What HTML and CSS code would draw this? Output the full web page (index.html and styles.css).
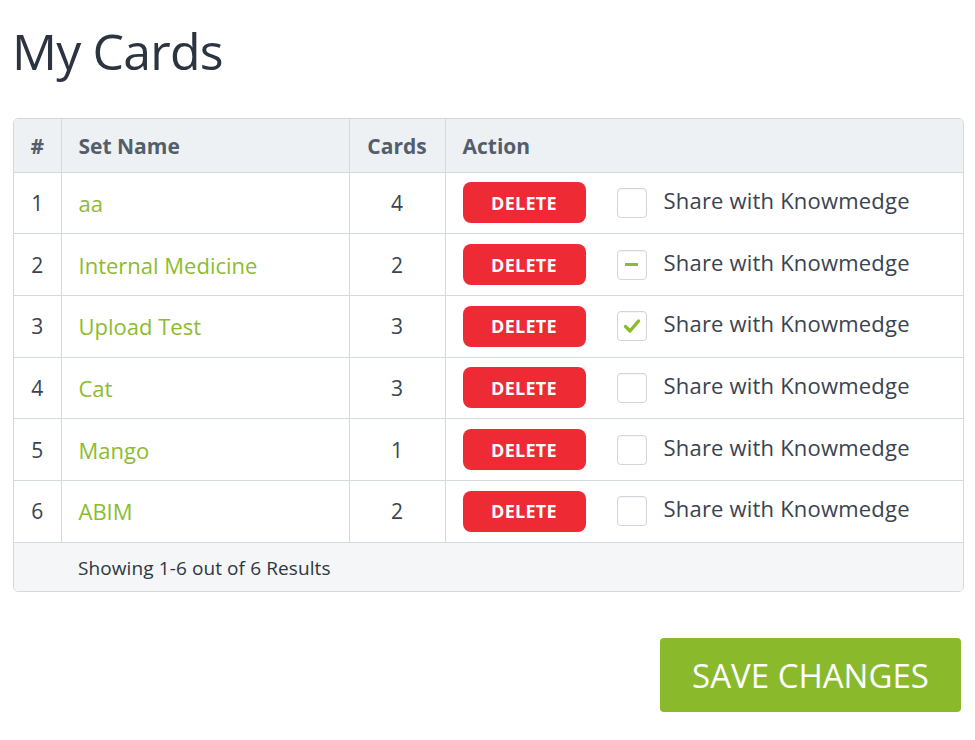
FILE: index.html
```html
<!DOCTYPE html>
<html>
<head>
<meta charset="utf-8">
<link rel="stylesheet" href="styles.css">
</head>
<body>
<div class="page">
  <h1 class="title">My Cards</h1>
  <div class="table-wrap">
    <table class="cards">
      <colgroup>
        <col class="c-num"><col class="c-name"><col class="c-cards"><col class="c-action">
      </colgroup>
      <thead>
        <tr><th class="num">#</th><th class="name">Set Name</th><th class="count">Cards</th><th class="action">Action</th></tr>
      </thead>
      <tbody>
        <tr><td class="num">1</td><td class="name"><a>aa</a></td><td class="count">4</td><td class="action"><div class="act"><button class="del">DELETE</button><span class="cb"></span><span class="share">Share with Knowmedge</span></div></td></tr>
        <tr><td class="num">2</td><td class="name"><a>Internal Medicine</a></td><td class="count">2</td><td class="action"><div class="act"><button class="del">DELETE</button><span class="cb cb-ind"><span class="dash"></span></span><span class="share">Share with Knowmedge</span></div></td></tr>
        <tr><td class="num">3</td><td class="name"><a>Upload Test</a></td><td class="count">3</td><td class="action"><div class="act"><button class="del">DELETE</button><span class="cb"><svg class="tick" viewBox="0 0 20 20"><path d="M3.5 10.5 L8 15 L16.5 5" fill="none" stroke="#8cbc2c" stroke-width="3.4" stroke-linecap="round" stroke-linejoin="round"/></svg></span><span class="share">Share with Knowmedge</span></div></td></tr>
        <tr><td class="num">4</td><td class="name"><a>Cat</a></td><td class="count">3</td><td class="action"><div class="act"><button class="del">DELETE</button><span class="cb"></span><span class="share">Share with Knowmedge</span></div></td></tr>
        <tr><td class="num">5</td><td class="name"><a>Mango</a></td><td class="count">1</td><td class="action"><div class="act"><button class="del">DELETE</button><span class="cb"></span><span class="share">Share with Knowmedge</span></div></td></tr>
        <tr><td class="num">6</td><td class="name"><a>ABIM</a></td><td class="count">2</td><td class="action"><div class="act"><button class="del">DELETE</button><span class="cb"></span><span class="share">Share with Knowmedge</span></div></td></tr>
      </tbody>
      <tfoot>
        <tr><td></td><td colspan="3" class="foot">Showing 1-6 out of 6 Results</td></tr>
      </tfoot>
    </table>
  </div>
  <div class="actions">
    <button class="save">SAVE CHANGES</button>
  </div>
</div>
</body>
</html>
```

FILE: styles.css
```css
html, body {
  margin: 0;
  padding: 0;
  background: #ffffff;
}
body {
  font-family: "Open Sans", "Noto Sans", sans-serif;
  color: #3a4350;
}
.page {
  width: 952px;
  padding: 18px 0 0 12px;
}
.title {
  margin: 0;
  font-size: 50px;
  font-weight: 400;
  color: #2b3440;
  line-height: 66px;
  letter-spacing: -0.8px;
}
.table-wrap {
  margin-top: 34px;
  margin-left: 1px;
  border: 1px solid #d3dade;
  border-radius: 5px;
  overflow: hidden;
}
.cards {
  width: 100%;
  border-collapse: collapse;
  table-layout: fixed;
}
.c-num { width: 47px; }
.c-name { width: 288px; }
.c-cards { width: 96px; }
.cards th, .cards td {
  border: 1px solid #d3dade;
  padding: 0;
}
.cards tr > :first-child { border-left: none; }
.cards tr > :last-child { border-right: none; }
.cards thead th { border-top: none; }
.cards thead tr {
  background: #eef1f4;
  height: 53px;
}
.cards th {
  font-size: 21px;
  font-weight: 700;
  color: #545e6b;
  text-align: left;
  padding-top: 2px;
}
.cards th.num, .cards td.num { text-align: center; }
.cards th.count, .cards td.count { text-align: center; }
.cards th.name, .cards td.name, .cards th.action, .cards td.action { padding-left: 17px; }
.cards tbody tr { height: 61.7px; }
.cards td {
  font-size: 21px;
  color: #3a4350;
}
.cards td.name a {
  font-size: 22px;
  color: #8cbc2c;
  text-decoration: none;
}
.act {
  display: flex;
  align-items: center;
}
.del {
  width: 123px;
  height: 41px;
  border: none;
  border-radius: 8px;
  background: #ee2a35;
  color: #ffffff;
  font-family: "Open Sans", "Noto Sans", sans-serif;
  font-size: 18px;
  font-weight: 700;
  letter-spacing: 0.3px;
  padding: 0;
  margin-right: 31px;
}
.cb {
  width: 28px;
  height: 28px;
  border: 1px solid #cfd5da;
  border-radius: 4px;
  box-sizing: content-box;
  display: flex;
  align-items: center;
  justify-content: center;
  margin-right: 17px;
  box-shadow: inset 0 1px 1px rgba(0,0,0,0.04);
}
.dash {
  width: 13px;
  height: 3px;
  background: #8cbc2c;
}
.tick {
  width: 20px;
  height: 20px;
}
.share {
  font-size: 22px;
  letter-spacing: 0.2px;
  color: #3a4350;
  position: relative;
  top: -3px;
}
.cards tfoot tr {
  background: #f4f6f8;
  height: 49px;
}
.cards tfoot td {
  border-bottom: none;
  border-left: none;
  border-right: none;
}
.cards td.foot {
  padding-left: 17px;
  padding-top: 2px;
  font-size: 19px;
  letter-spacing: 0.1px;
  color: #2f3740;
}
.actions {
  display: flex;
  justify-content: flex-end;
  margin-top: 46px;
  padding-right: 3px;
}
.save {
  width: 301px;
  height: 74px;
  border: none;
  border-radius: 4px;
  background: #8aba2b;
  color: #ffffff;
  font-family: "Open Sans", "Noto Sans", sans-serif;
  font-size: 33px;
  font-weight: 400;
  padding: 0;
}
```
